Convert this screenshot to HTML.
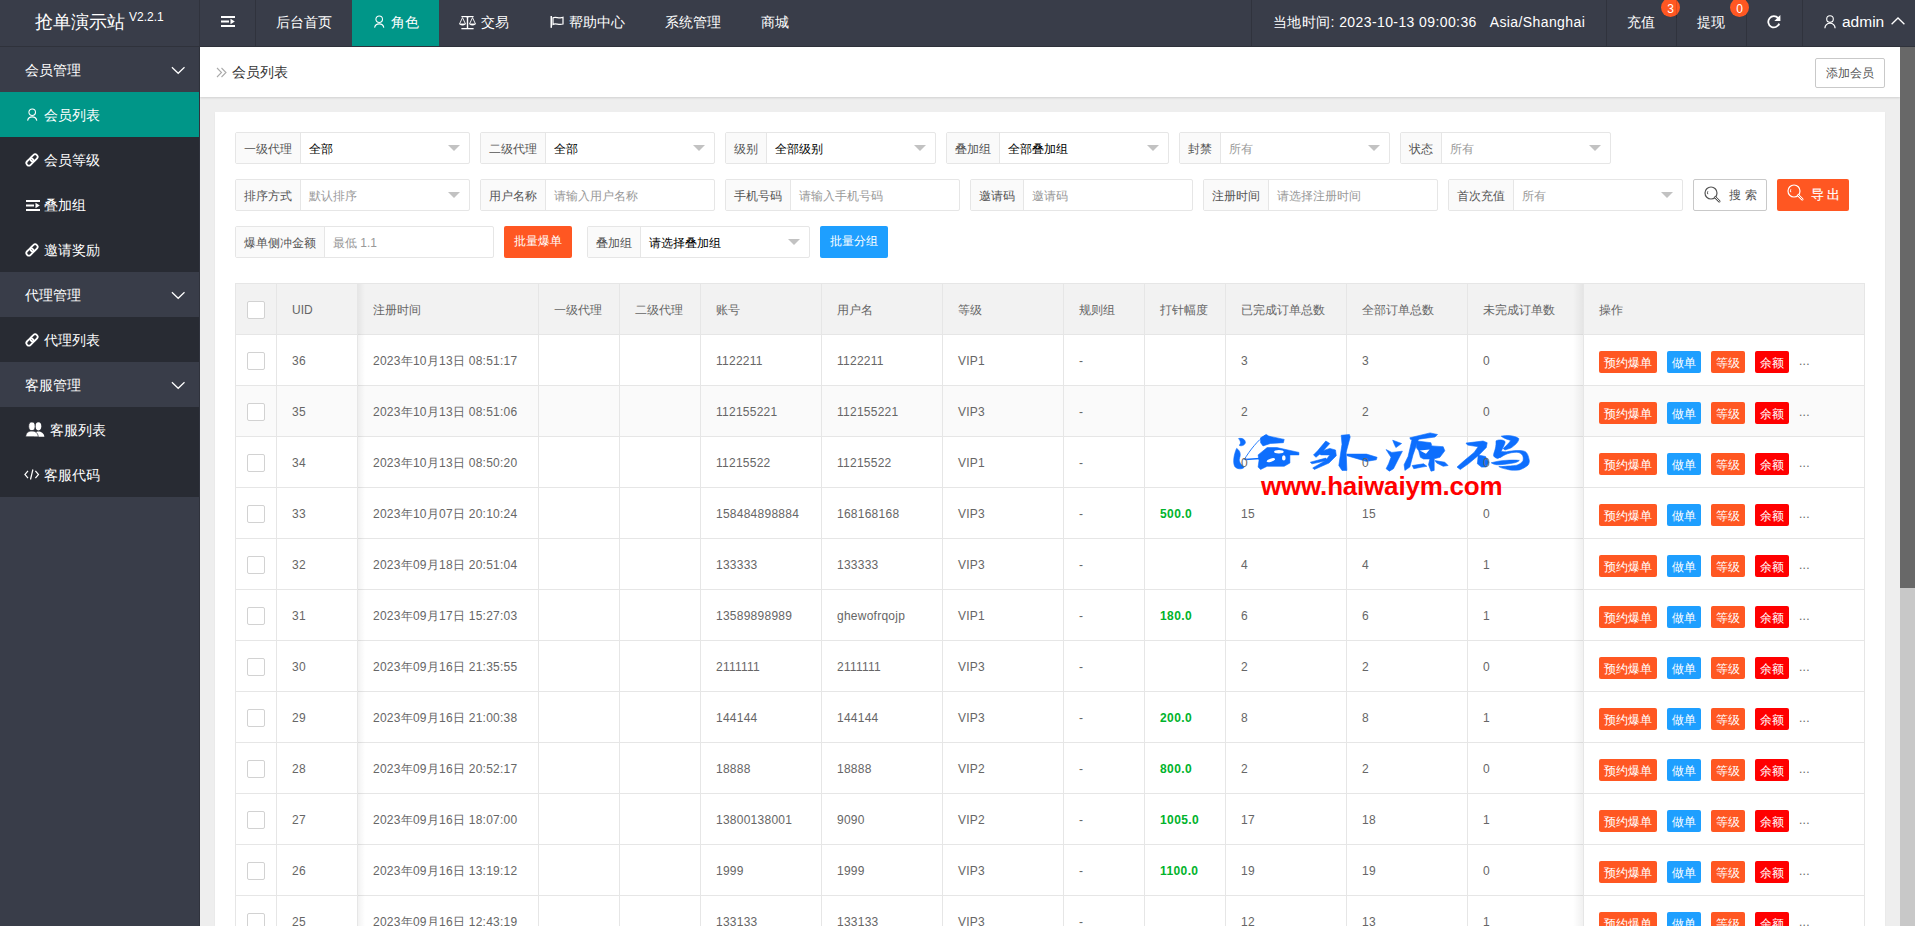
<!DOCTYPE html>
<html><head><meta charset="utf-8"><title>会员列表</title>
<style>
*{margin:0;padding:0;box-sizing:border-box}
html,body{width:1915px;height:926px;overflow:hidden;background:#eeeeee;font-family:"Liberation Sans",sans-serif;}
.a{position:absolute}
.t{position:absolute;white-space:nowrap}
.hdr{position:absolute;left:0;top:0;width:1915px;height:47px;background:#393D49;border-bottom:1px solid #2F323B}
.sep{position:absolute;top:0;width:1px;height:46px;background:#30333D}
.nav{position:absolute;top:-1px;height:46px;line-height:46px;color:#fff;font-size:14px;white-space:nowrap}
.side{position:absolute;left:0;top:47px;width:200px;height:879px;background:#393D49;border-right:1px solid #30333D}
.sg{position:absolute;left:0;width:199px;height:45px;line-height:47px;color:#fff;font-size:14px;padding-left:25px}
.sc{position:absolute;left:0;width:199px;height:45px;line-height:45px;color:#fff;font-size:14px;background:#282B33}
.fi{position:absolute;height:32px;border:1px solid #e6e6e6;border-radius:2px;background:#fff}
.fl{position:absolute;left:0;top:0;height:30px;line-height:32px;padding:0 8px;background:#FAFAFA;border-right:1px solid #e6e6e6;color:#555;font-size:12px;white-space:nowrap}
.fv{position:absolute;top:0;height:30px;line-height:32px;font-size:12px;white-space:nowrap;color:#000}
.ph{color:#999}
.btn{position:absolute;height:32px;line-height:32px;border-radius:2px;color:#fff;font-size:12px;text-align:center;white-space:nowrap}
.tc{position:absolute;z-index:2;font-size:12px;color:#666;white-space:nowrap;letter-spacing:0.25px;margin-top:1px}
.cb{position:absolute;width:18px;height:18px;border:1px solid #d2d2d2;border-radius:2px;background:#fff}
.xs{position:absolute;height:22px;line-height:24px;padding:0 5px;font-size:12px;color:#fff;border-radius:2px;white-space:nowrap}
</style></head><body>

<div class="hdr"></div>
<div class="t" style="left:35px;top:7px;height:30px;line-height:30px;font-size:18px;color:#fff">抢单演示站</div>
<div class="t" style="left:129px;top:10px;line-height:14px;font-size:12px;color:#fff">V2.2.1</div>
<div class="sep" style="left:199px"></div>
<div class="sep" style="left:255px"></div>
<svg width="16" height="14" viewBox="0 0 16 14" style="position:absolute;left:221px;top:15px"><rect x="0" y="1" width="14" height="2" fill="#fff"/><rect x="0" y="5.5" width="8" height="2" fill="#fff"/><path d="M9.5 3.8 L13.8 6.5 L9.5 9.2Z" fill="#fff"/><rect x="0" y="10" width="14" height="2" fill="#fff"/></svg>
<div class="a" style="left:352px;top:0;width:87px;height:46px;background:#009688"></div>
<div class="nav" style="left:276px">后台首页</div>
<svg width="14" height="16" viewBox="0 0 14 16" style="position:absolute;left:373px;top:15px"><circle cx="6.2" cy="4.2" r="3.3" fill="none" stroke="#fff" stroke-width="1.05"/><path d="M1.6 12.6 A4.7 4.7 0 0 1 10.8 12.6" fill="none" stroke="#fff" stroke-width="1.15"/></svg>
<div class="nav" style="left:391px">角色</div>
<svg width="20" height="16" viewBox="0 0 20 16" style="position:absolute;left:459px;top:16px"><rect x="2.4" y="0" width="12.2" height="1.2" fill="#fff"/><circle cx="8.5" cy="0.6" r="1.2" fill="#fff"/><rect x="7.8" y="0.5" width="1.4" height="12" fill="#fff"/><rect x="2.4" y="12" width="12.2" height="1.3" fill="#fff"/><path d="M3.5 1.6 L0.5 8 L6.5 8 Z" fill="none" stroke="#fff" stroke-width="0.9"/><path d="M0.3 8 Q3.5 11.2 6.7 8 Z" fill="#fff"/><path d="M13.5 1.6 L10.5 8 L16.5 8 Z" fill="none" stroke="#fff" stroke-width="0.9"/><path d="M10.3 8 Q13.5 11.2 16.7 8 Z" fill="#fff"/></svg>
<div class="nav" style="left:481px">交易</div>
<svg width="16" height="14" viewBox="0 0 16 14" style="position:absolute;left:550px;top:16px"><rect x="0.5" y="0" width="1.5" height="11.8" fill="#fff"/><path d="M3 1.8 C6 0.2 8.6 3 13 1.4 L13 8 C8.6 9.6 6 6.8 3 8.4 Z" fill="none" stroke="#fff" stroke-width="1.2"/></svg>
<div class="nav" style="left:569px">帮助中心</div>
<div class="nav" style="left:665px">系统管理</div>
<div class="nav" style="left:761px">商城</div>
<div class="sep" style="left:1251px"></div>
<div class="nav" style="left:1273px;letter-spacing:0.4px">当地时间: 2023-10-13 09:00:36 &nbsp;&nbsp;Asia/Shanghai</div>
<div class="sep" style="left:1606px"></div>
<div class="sep" style="left:1676px"></div>
<div class="sep" style="left:1746px"></div>
<div class="nav" style="left:1627px">充值</div>
<div class="nav" style="left:1697px">提现</div>
<div class="a" style="left:1661px;top:-2px;width:19px;height:19px;border-radius:50%;background:#FF5722;color:#fff;font-size:12px;line-height:19px;text-align:center;padding-top:2px">3</div>
<div class="a" style="left:1730px;top:-2px;width:19px;height:19px;border-radius:50%;background:#FF5722;color:#fff;font-size:12px;line-height:19px;text-align:center;padding-top:2px">0</div>
<div class="a" style="left:1676px;top:0;width:1px;height:18px;background:rgba(0,0,0,.12)"></div>
<svg width="16" height="16" viewBox="0 0 16 16" style="position:absolute;left:1766px;top:14px"><path d="M12.2 4.2 A5.6 5.6 0 1 0 13.2 9.6" fill="none" stroke="#fff" stroke-width="1.8"/><path d="M8.3 7 L14.4 7 L14.4 0.9 Z" fill="#fff"/></svg>
<div class="sep" style="left:1802px"></div>
<svg width="14" height="16" viewBox="0 0 14 16" style="position:absolute;left:1824px;top:14.5px"><circle cx="6" cy="4.1" r="3.3" fill="none" stroke="#fff" stroke-width="1.1"/><path d="M0.9 13.2 A5.1 5.1 0 0 1 11.1 13.2" fill="none" stroke="#fff" stroke-width="1.2"/></svg>
<div class="nav" style="left:1842px;top:-1px;font-size:15.5px">admin</div>
<svg width="16" height="10" viewBox="0 0 16 10" style="position:absolute;left:1891px;top:17px"><path d="M0.6 7.2 L7 1 L13.4 7.2" fill="none" stroke="#fff" stroke-width="1.3"/></svg>
<div class="side"></div>
<div class="sg" style="top:47px">会员管理</div>
<svg width="16" height="10" viewBox="0 0 16 10" style="position:absolute;left:171px;top:66px"><path d="M0.9 1.2 L7.2 7.3 L13.5 1.2" fill="none" stroke="#fff" stroke-width="1.2"/></svg>
<div class="sc" style="top:92px;background:#009688;"></div>
<svg width="14" height="16" viewBox="0 0 14 16" style="position:absolute;left:26px;top:108px"><circle cx="6.2" cy="4.2" r="3.3" fill="none" stroke="#fff" stroke-width="1.05"/><path d="M1.6 12.6 A4.7 4.7 0 0 1 10.8 12.6" fill="none" stroke="#fff" stroke-width="1.15"/></svg>
<div class="t" style="left:44px;top:93px;line-height:45px;font-size:14px;color:#fff">会员列表</div>
<div class="sc" style="top:137px;"></div>
<svg width="18" height="18" viewBox="0 0 18 18" style="position:absolute;left:24px;top:152px"><g transform="translate(8 7.9) rotate(-45)"><rect x="-6.9" y="-2.5" width="8.1" height="5" rx="2.5" fill="none" stroke="#fff" stroke-width="1.8"/><rect x="-1.2" y="-2.5" width="8.1" height="5" rx="2.5" fill="none" stroke="#fff" stroke-width="1.8"/></g></svg>
<div class="t" style="left:44px;top:138px;line-height:45px;font-size:14px;color:#fff">会员等级</div>
<div class="sc" style="top:182px;"></div>
<svg width="16" height="14" viewBox="0 0 16 14" style="position:absolute;left:26px;top:199px"><rect x="0" y="1" width="14" height="2" fill="#fff"/><rect x="0" y="5.5" width="8" height="2" fill="#fff"/><path d="M9.5 3.8 L13.8 6.5 L9.5 9.2Z" fill="#fff"/><rect x="0" y="10" width="14" height="2" fill="#fff"/></svg>
<div class="t" style="left:44px;top:183px;line-height:45px;font-size:14px;color:#fff">叠加组</div>
<div class="sc" style="top:227px;"></div>
<svg width="18" height="18" viewBox="0 0 18 18" style="position:absolute;left:24px;top:242px"><g transform="translate(8 7.9) rotate(-45)"><rect x="-6.9" y="-2.5" width="8.1" height="5" rx="2.5" fill="none" stroke="#fff" stroke-width="1.8"/><rect x="-1.2" y="-2.5" width="8.1" height="5" rx="2.5" fill="none" stroke="#fff" stroke-width="1.8"/></g></svg>
<div class="t" style="left:44px;top:228px;line-height:45px;font-size:14px;color:#fff">邀请奖励</div>
<div class="sg" style="top:272px">代理管理</div>
<svg width="16" height="10" viewBox="0 0 16 10" style="position:absolute;left:171px;top:291px"><path d="M0.9 1.2 L7.2 7.3 L13.5 1.2" fill="none" stroke="#fff" stroke-width="1.2"/></svg>
<div class="sc" style="top:317px;"></div>
<svg width="18" height="18" viewBox="0 0 18 18" style="position:absolute;left:24px;top:332px"><g transform="translate(8 7.9) rotate(-45)"><rect x="-6.9" y="-2.5" width="8.1" height="5" rx="2.5" fill="none" stroke="#fff" stroke-width="1.8"/><rect x="-1.2" y="-2.5" width="8.1" height="5" rx="2.5" fill="none" stroke="#fff" stroke-width="1.8"/></g></svg>
<div class="t" style="left:44px;top:318px;line-height:45px;font-size:14px;color:#fff">代理列表</div>
<div class="sg" style="top:362px">客服管理</div>
<svg width="16" height="10" viewBox="0 0 16 10" style="position:absolute;left:171px;top:381px"><path d="M0.9 1.2 L7.2 7.3 L13.5 1.2" fill="none" stroke="#fff" stroke-width="1.2"/></svg>
<div class="sc" style="top:407px;"></div>
<svg width="22" height="16" viewBox="0 0 22 16" style="position:absolute;left:25px;top:422px"><ellipse cx="13.4" cy="4.3" rx="2.9" ry="4.1" fill="#fff"/><path d="M9 14.8 C9.3 10.8 11 9.4 13.4 9.4 C16 9.4 18.9 10.8 19.4 14.8 Z" fill="#fff"/><ellipse cx="6.9" cy="4.3" rx="3.2" ry="4.3" fill="#fff" stroke="#282B33" stroke-width="0.7"/><path d="M0.7 14.8 C1 10.6 3.5 9.1 6.9 9.1 C10.3 9.1 12.8 10.6 13.3 14.8 Z" fill="#fff" stroke="#282B33" stroke-width="0.7"/></svg>
<div class="t" style="left:50px;top:408px;line-height:45px;font-size:14px;color:#fff">客服列表</div>
<div class="sc" style="top:452px;"></div>
<svg width="16" height="14" viewBox="0 0 16 14" style="position:absolute;left:24px;top:468px"><path d="M4 2.8 L0.9 6.5 L4 10.2" fill="none" stroke="#fff" stroke-width="1.2"/><path d="M11.4 2.8 L14.5 6.5 L11.4 10.2" fill="none" stroke="#fff" stroke-width="1.2"/><path d="M8.9 1.5 L6.5 11.5" fill="none" stroke="#fff" stroke-width="1.2"/></svg>
<div class="t" style="left:44px;top:453px;line-height:45px;font-size:14px;color:#fff">客服代码</div>
<div class="a" style="left:200px;top:47px;width:1700px;height:50px;background:#fff;box-shadow:0 1px 2px rgba(0,0,0,.12)"></div>
<svg width="14" height="12" viewBox="0 0 14 12" style="position:absolute;left:215.5px;top:66.5px"><path d="M1 1 L5.5 5.5 L1 10" fill="none" stroke="#aaa" stroke-width="1.1"/><path d="M5.5 1 L10 5.5 L5.5 10" fill="none" stroke="#aaa" stroke-width="1.1"/></svg>
<div class="t" style="left:232px;top:47px;line-height:50px;font-size:14px;color:#333">会员列表</div>
<div class="a" style="left:1815px;top:58px;width:70px;height:30px;line-height:28px;border:1px solid #C9C9C9;border-radius:2px;background:#fff;color:#555;font-size:12px;text-align:center">添加会员</div>
<div class="a" style="left:1900px;top:47px;width:15px;height:879px;background:#c8c8c8"></div>
<div class="a" style="left:1900px;top:47px;width:15px;height:541px;background:#686868"></div>
<div class="a" style="left:215px;top:112px;width:1670px;height:814px;background:#fff;box-shadow:0 1px 2px rgba(0,0,0,.05)"></div>
<div class="fi" style="left:235px;top:132px;width:235px"><div class="fl">一级代理</div><div class="fv" style="left:73px">全部</div></div>
<div style="position:absolute;left:448px;top:145px;width:0;height:0;border-left:6px solid transparent;border-right:6px solid transparent;border-top:6px solid #c2c2c2"></div>
<div class="fi" style="left:480px;top:132px;width:235px"><div class="fl">二级代理</div><div class="fv" style="left:73px">全部</div></div>
<div style="position:absolute;left:693px;top:145px;width:0;height:0;border-left:6px solid transparent;border-right:6px solid transparent;border-top:6px solid #c2c2c2"></div>
<div class="fi" style="left:725px;top:132px;width:211px"><div class="fl">级别</div><div class="fv" style="left:49px">全部级别</div></div>
<div style="position:absolute;left:914px;top:145px;width:0;height:0;border-left:6px solid transparent;border-right:6px solid transparent;border-top:6px solid #c2c2c2"></div>
<div class="fi" style="left:946px;top:132px;width:223px"><div class="fl">叠加组</div><div class="fv" style="left:61px">全部叠加组</div></div>
<div style="position:absolute;left:1147px;top:145px;width:0;height:0;border-left:6px solid transparent;border-right:6px solid transparent;border-top:6px solid #c2c2c2"></div>
<div class="fi" style="left:1179px;top:132px;width:211px"><div class="fl">封禁</div><div class="fv ph" style="left:49px">所有</div></div>
<div style="position:absolute;left:1368px;top:145px;width:0;height:0;border-left:6px solid transparent;border-right:6px solid transparent;border-top:6px solid #c2c2c2"></div>
<div class="fi" style="left:1400px;top:132px;width:211px"><div class="fl">状态</div><div class="fv ph" style="left:49px">所有</div></div>
<div style="position:absolute;left:1589px;top:145px;width:0;height:0;border-left:6px solid transparent;border-right:6px solid transparent;border-top:6px solid #c2c2c2"></div>
<div class="fi" style="left:235px;top:179px;width:235px"><div class="fl">排序方式</div><div class="fv ph" style="left:73px">默认排序</div></div>
<div style="position:absolute;left:448px;top:192px;width:0;height:0;border-left:6px solid transparent;border-right:6px solid transparent;border-top:6px solid #c2c2c2"></div>
<div class="fi" style="left:480px;top:179px;width:235px"><div class="fl">用户名称</div><div class="fv ph" style="left:73px">请输入用户名称</div></div>
<div class="fi" style="left:725px;top:179px;width:235px"><div class="fl">手机号码</div><div class="fv ph" style="left:73px">请输入手机号码</div></div>
<div class="fi" style="left:970px;top:179px;width:223px"><div class="fl">邀请码</div><div class="fv ph" style="left:61px">邀请码</div></div>
<div class="fi" style="left:1203px;top:179px;width:235px"><div class="fl">注册时间</div><div class="fv ph" style="left:73px">请选择注册时间</div></div>
<div class="fi" style="left:1448px;top:179px;width:235px"><div class="fl">首次充值</div><div class="fv ph" style="left:73px">所有</div></div>
<div style="position:absolute;left:1661px;top:192px;width:0;height:0;border-left:6px solid transparent;border-right:6px solid transparent;border-top:6px solid #c2c2c2"></div>
<div class="btn" style="left:1693px;top:179px;width:74px;border:1px solid #C9C9C9;background:#fff;color:#555;line-height:30px"></div>
<svg width="18" height="18" viewBox="0 0 18 18" style="position:absolute;left:1704px;top:186px"><circle cx="7" cy="7" r="6" fill="none" stroke="#555" stroke-width="1.2"/><path d="M3.8 5.3 A3.6 3.6 0 0 0 3.8 8.2" fill="none" stroke="#555" stroke-width="1"/><path d="M11.3 11.3 L15.3 15.3" stroke="#555" stroke-width="2.4" stroke-linecap="round"/><path d="M11.3 11.3 L15.3 15.3" stroke="#fff" stroke-width="0.9" stroke-linecap="round"/></svg>
<div class="t" style="left:1729px;top:179px;line-height:32px;font-size:12px;color:#555;letter-spacing:4px">搜索</div>
<div class="btn" style="left:1777px;top:179px;width:72px;background:#FF5722"></div>
<svg width="18" height="18" viewBox="0 0 18 18" style="position:absolute;left:1787px;top:184px"><circle cx="7" cy="7" r="6" fill="none" stroke="#fff" stroke-width="1.2"/><path d="M3.8 5.3 A3.6 3.6 0 0 0 3.8 8.2" fill="none" stroke="#fff" stroke-width="1"/><path d="M11.3 11.3 L15.3 15.3" stroke="#fff" stroke-width="2.4" stroke-linecap="round"/><path d="M11.3 11.3 L15.3 15.3" stroke="#FF5722" stroke-width="0.9" stroke-linecap="round"/></svg>
<div class="t" style="left:1811px;top:179px;line-height:32px;font-size:13px;color:#fff;letter-spacing:3px;-webkit-text-stroke:0.2px #fff">导出</div>
<div class="fi" style="left:235px;top:226px;width:259px"><div class="fl">爆单侧冲金额</div><div class="fv ph" style="left:97px">最低 1.1</div></div>
<div class="btn" style="left:504px;top:226px;width:68px;background:#FF5722;line-height:30px">批量爆单</div>
<div class="fi" style="left:587px;top:226px;width:223px"><div class="fl">叠加组</div><div class="fv" style="left:61px">请选择叠加组</div></div>
<div style="position:absolute;left:788px;top:239px;width:0;height:0;border-left:6px solid transparent;border-right:6px solid transparent;border-top:6px solid #c2c2c2"></div>
<div class="btn" style="left:820px;top:226px;width:68px;background:#1E9FFF;line-height:30px">批量分组</div>
<div class="a" style="left:235px;top:283px;width:1630px;height:52px;background:#F2F2F2"></div>
<div class="a" style="left:235px;top:385px;width:1630px;height:51px;background:#FAFAFA"></div>
<div class="a" style="left:235px;top:283px;width:1630px;height:1px;background:#e6e6e6"></div>
<div class="a" style="left:235px;top:334px;width:1630px;height:1px;background:#e6e6e6"></div>
<div class="a" style="left:235px;top:385px;width:1630px;height:1px;background:#e6e6e6"></div>
<div class="a" style="left:235px;top:436px;width:1630px;height:1px;background:#e6e6e6"></div>
<div class="a" style="left:235px;top:487px;width:1630px;height:1px;background:#e6e6e6"></div>
<div class="a" style="left:235px;top:538px;width:1630px;height:1px;background:#e6e6e6"></div>
<div class="a" style="left:235px;top:589px;width:1630px;height:1px;background:#e6e6e6"></div>
<div class="a" style="left:235px;top:640px;width:1630px;height:1px;background:#e6e6e6"></div>
<div class="a" style="left:235px;top:691px;width:1630px;height:1px;background:#e6e6e6"></div>
<div class="a" style="left:235px;top:742px;width:1630px;height:1px;background:#e6e6e6"></div>
<div class="a" style="left:235px;top:793px;width:1630px;height:1px;background:#e6e6e6"></div>
<div class="a" style="left:235px;top:844px;width:1630px;height:1px;background:#e6e6e6"></div>
<div class="a" style="left:235px;top:895px;width:1630px;height:1px;background:#e6e6e6"></div>
<div class="a" style="left:235px;top:283px;width:1px;height:643px;background:#e6e6e6"></div>
<div class="a" style="left:276px;top:283px;width:1px;height:643px;background:#e6e6e6"></div>
<div class="a" style="left:357px;top:283px;width:1px;height:643px;background:#e6e6e6"></div>
<div class="a" style="left:538px;top:283px;width:1px;height:643px;background:#e6e6e6"></div>
<div class="a" style="left:619px;top:283px;width:1px;height:643px;background:#e6e6e6"></div>
<div class="a" style="left:700px;top:283px;width:1px;height:643px;background:#e6e6e6"></div>
<div class="a" style="left:821px;top:283px;width:1px;height:643px;background:#e6e6e6"></div>
<div class="a" style="left:942px;top:283px;width:1px;height:643px;background:#e6e6e6"></div>
<div class="a" style="left:1063px;top:283px;width:1px;height:643px;background:#e6e6e6"></div>
<div class="a" style="left:1144px;top:283px;width:1px;height:643px;background:#e6e6e6"></div>
<div class="a" style="left:1225px;top:283px;width:1px;height:643px;background:#e6e6e6"></div>
<div class="a" style="left:1346px;top:283px;width:1px;height:643px;background:#e6e6e6"></div>
<div class="a" style="left:1467px;top:283px;width:1px;height:643px;background:#e6e6e6"></div>
<div class="a" style="left:1583px;top:283px;width:1px;height:643px;background:#e6e6e6"></div>
<div class="a" style="left:1864px;top:283px;width:1px;height:643px;background:#e6e6e6"></div>
<div class="a" style="left:358px;top:284px;width:7px;height:643px;background:linear-gradient(to right,rgba(0,0,0,.05),rgba(0,0,0,0))"></div>
<div class="a" style="left:1573px;top:284px;width:10px;height:643px;background:linear-gradient(to left,rgba(0,0,0,.055),rgba(0,0,0,0))"></div>
<div class="tc" style="left:292px;top:284px;line-height:50px;letter-spacing:0">UID</div>
<div class="tc" style="left:373px;top:284px;line-height:50px;letter-spacing:0">注册时间</div>
<div class="tc" style="left:554px;top:284px;line-height:50px;letter-spacing:0">一级代理</div>
<div class="tc" style="left:635px;top:284px;line-height:50px;letter-spacing:0">二级代理</div>
<div class="tc" style="left:716px;top:284px;line-height:50px;letter-spacing:0">账号</div>
<div class="tc" style="left:837px;top:284px;line-height:50px;letter-spacing:0">用户名</div>
<div class="tc" style="left:958px;top:284px;line-height:50px;letter-spacing:0">等级</div>
<div class="tc" style="left:1079px;top:284px;line-height:50px;letter-spacing:0">规则组</div>
<div class="tc" style="left:1160px;top:284px;line-height:50px;letter-spacing:0">打针幅度</div>
<div class="tc" style="left:1241px;top:284px;line-height:50px;letter-spacing:0">已完成订单总数</div>
<div class="tc" style="left:1362px;top:284px;line-height:50px;letter-spacing:0">全部订单总数</div>
<div class="tc" style="left:1483px;top:284px;line-height:50px;letter-spacing:0">未完成订单数</div>
<div class="tc" style="left:1599px;top:284px;line-height:50px;letter-spacing:0">操作</div>
<div class="cb" style="left:247px;top:301px"></div>
<div class="cb" style="left:247px;top:352px"></div>
<div class="tc" style="left:292px;top:335px;line-height:50px">36</div>
<div class="tc" style="left:373px;top:335px;line-height:50px">2023年10月13日 08:51:17</div>
<div class="tc" style="left:716px;top:335px;line-height:50px">1122211</div>
<div class="tc" style="left:837px;top:335px;line-height:50px">1122211</div>
<div class="tc" style="left:958px;top:335px;line-height:50px">VIP1</div>
<div class="tc" style="left:1079px;top:335px;line-height:50px">-</div>
<div class="tc" style="left:1241px;top:335px;line-height:50px">3</div>
<div class="tc" style="left:1362px;top:335px;line-height:50px">3</div>
<div class="tc" style="left:1483px;top:335px;line-height:50px">0</div>
<div class="xs" style="left:1599px;top:351px;background:#FF5722">预约爆单</div>
<div class="xs" style="left:1667px;top:351px;background:#1E9FFF">做单</div>
<div class="xs" style="left:1711px;top:351px;background:#FF5722">等级</div>
<div class="xs" style="left:1755px;top:351px;background:#FF0000">余额</div>
<div class="tc" style="left:1799px;top:335px;line-height:50px;color:#666">...</div>
<div class="cb" style="left:247px;top:403px"></div>
<div class="tc" style="left:292px;top:386px;line-height:50px">35</div>
<div class="tc" style="left:373px;top:386px;line-height:50px">2023年10月13日 08:51:06</div>
<div class="tc" style="left:716px;top:386px;line-height:50px">112155221</div>
<div class="tc" style="left:837px;top:386px;line-height:50px">112155221</div>
<div class="tc" style="left:958px;top:386px;line-height:50px">VIP3</div>
<div class="tc" style="left:1079px;top:386px;line-height:50px">-</div>
<div class="tc" style="left:1241px;top:386px;line-height:50px">2</div>
<div class="tc" style="left:1362px;top:386px;line-height:50px">2</div>
<div class="tc" style="left:1483px;top:386px;line-height:50px">0</div>
<div class="xs" style="left:1599px;top:402px;background:#FF5722">预约爆单</div>
<div class="xs" style="left:1667px;top:402px;background:#1E9FFF">做单</div>
<div class="xs" style="left:1711px;top:402px;background:#FF5722">等级</div>
<div class="xs" style="left:1755px;top:402px;background:#FF0000">余额</div>
<div class="tc" style="left:1799px;top:386px;line-height:50px;color:#666">...</div>
<div class="cb" style="left:247px;top:454px"></div>
<div class="tc" style="left:292px;top:437px;line-height:50px">34</div>
<div class="tc" style="left:373px;top:437px;line-height:50px">2023年10月13日 08:50:20</div>
<div class="tc" style="left:716px;top:437px;line-height:50px">11215522</div>
<div class="tc" style="left:837px;top:437px;line-height:50px">11215522</div>
<div class="tc" style="left:958px;top:437px;line-height:50px">VIP1</div>
<div class="tc" style="left:1079px;top:437px;line-height:50px">-</div>
<div class="tc" style="left:1241px;top:437px;line-height:50px">0</div>
<div class="tc" style="left:1362px;top:437px;line-height:50px">0</div>
<div class="tc" style="left:1483px;top:437px;line-height:50px">0</div>
<div class="xs" style="left:1599px;top:453px;background:#FF5722">预约爆单</div>
<div class="xs" style="left:1667px;top:453px;background:#1E9FFF">做单</div>
<div class="xs" style="left:1711px;top:453px;background:#FF5722">等级</div>
<div class="xs" style="left:1755px;top:453px;background:#FF0000">余额</div>
<div class="tc" style="left:1799px;top:437px;line-height:50px;color:#666">...</div>
<div class="cb" style="left:247px;top:505px"></div>
<div class="tc" style="left:292px;top:488px;line-height:50px">33</div>
<div class="tc" style="left:373px;top:488px;line-height:50px">2023年10月07日 20:10:24</div>
<div class="tc" style="left:716px;top:488px;line-height:50px">158484898884</div>
<div class="tc" style="left:837px;top:488px;line-height:50px">168168168</div>
<div class="tc" style="left:958px;top:488px;line-height:50px">VIP3</div>
<div class="tc" style="left:1079px;top:488px;line-height:50px">-</div>
<div class="tc" style="left:1241px;top:488px;line-height:50px">15</div>
<div class="tc" style="left:1362px;top:488px;line-height:50px">15</div>
<div class="tc" style="left:1483px;top:488px;line-height:50px">0</div>
<div class="tc" style="left:1160px;top:488px;line-height:50px;color:#00B32C;font-weight:bold;letter-spacing:0.4px">500.0</div>
<div class="xs" style="left:1599px;top:504px;background:#FF5722">预约爆单</div>
<div class="xs" style="left:1667px;top:504px;background:#1E9FFF">做单</div>
<div class="xs" style="left:1711px;top:504px;background:#FF5722">等级</div>
<div class="xs" style="left:1755px;top:504px;background:#FF0000">余额</div>
<div class="tc" style="left:1799px;top:488px;line-height:50px;color:#666">...</div>
<div class="cb" style="left:247px;top:556px"></div>
<div class="tc" style="left:292px;top:539px;line-height:50px">32</div>
<div class="tc" style="left:373px;top:539px;line-height:50px">2023年09月18日 20:51:04</div>
<div class="tc" style="left:716px;top:539px;line-height:50px">133333</div>
<div class="tc" style="left:837px;top:539px;line-height:50px">133333</div>
<div class="tc" style="left:958px;top:539px;line-height:50px">VIP3</div>
<div class="tc" style="left:1079px;top:539px;line-height:50px">-</div>
<div class="tc" style="left:1241px;top:539px;line-height:50px">4</div>
<div class="tc" style="left:1362px;top:539px;line-height:50px">4</div>
<div class="tc" style="left:1483px;top:539px;line-height:50px">1</div>
<div class="xs" style="left:1599px;top:555px;background:#FF5722">预约爆单</div>
<div class="xs" style="left:1667px;top:555px;background:#1E9FFF">做单</div>
<div class="xs" style="left:1711px;top:555px;background:#FF5722">等级</div>
<div class="xs" style="left:1755px;top:555px;background:#FF0000">余额</div>
<div class="tc" style="left:1799px;top:539px;line-height:50px;color:#666">...</div>
<div class="cb" style="left:247px;top:607px"></div>
<div class="tc" style="left:292px;top:590px;line-height:50px">31</div>
<div class="tc" style="left:373px;top:590px;line-height:50px">2023年09月17日 15:27:03</div>
<div class="tc" style="left:716px;top:590px;line-height:50px">13589898989</div>
<div class="tc" style="left:837px;top:590px;line-height:50px">ghewofrqojp</div>
<div class="tc" style="left:958px;top:590px;line-height:50px">VIP1</div>
<div class="tc" style="left:1079px;top:590px;line-height:50px">-</div>
<div class="tc" style="left:1241px;top:590px;line-height:50px">6</div>
<div class="tc" style="left:1362px;top:590px;line-height:50px">6</div>
<div class="tc" style="left:1483px;top:590px;line-height:50px">1</div>
<div class="tc" style="left:1160px;top:590px;line-height:50px;color:#00B32C;font-weight:bold;letter-spacing:0.4px">180.0</div>
<div class="xs" style="left:1599px;top:606px;background:#FF5722">预约爆单</div>
<div class="xs" style="left:1667px;top:606px;background:#1E9FFF">做单</div>
<div class="xs" style="left:1711px;top:606px;background:#FF5722">等级</div>
<div class="xs" style="left:1755px;top:606px;background:#FF0000">余额</div>
<div class="tc" style="left:1799px;top:590px;line-height:50px;color:#666">...</div>
<div class="cb" style="left:247px;top:658px"></div>
<div class="tc" style="left:292px;top:641px;line-height:50px">30</div>
<div class="tc" style="left:373px;top:641px;line-height:50px">2023年09月16日 21:35:55</div>
<div class="tc" style="left:716px;top:641px;line-height:50px">2111111</div>
<div class="tc" style="left:837px;top:641px;line-height:50px">2111111</div>
<div class="tc" style="left:958px;top:641px;line-height:50px">VIP3</div>
<div class="tc" style="left:1079px;top:641px;line-height:50px">-</div>
<div class="tc" style="left:1241px;top:641px;line-height:50px">2</div>
<div class="tc" style="left:1362px;top:641px;line-height:50px">2</div>
<div class="tc" style="left:1483px;top:641px;line-height:50px">0</div>
<div class="xs" style="left:1599px;top:657px;background:#FF5722">预约爆单</div>
<div class="xs" style="left:1667px;top:657px;background:#1E9FFF">做单</div>
<div class="xs" style="left:1711px;top:657px;background:#FF5722">等级</div>
<div class="xs" style="left:1755px;top:657px;background:#FF0000">余额</div>
<div class="tc" style="left:1799px;top:641px;line-height:50px;color:#666">...</div>
<div class="cb" style="left:247px;top:709px"></div>
<div class="tc" style="left:292px;top:692px;line-height:50px">29</div>
<div class="tc" style="left:373px;top:692px;line-height:50px">2023年09月16日 21:00:38</div>
<div class="tc" style="left:716px;top:692px;line-height:50px">144144</div>
<div class="tc" style="left:837px;top:692px;line-height:50px">144144</div>
<div class="tc" style="left:958px;top:692px;line-height:50px">VIP3</div>
<div class="tc" style="left:1079px;top:692px;line-height:50px">-</div>
<div class="tc" style="left:1241px;top:692px;line-height:50px">8</div>
<div class="tc" style="left:1362px;top:692px;line-height:50px">8</div>
<div class="tc" style="left:1483px;top:692px;line-height:50px">1</div>
<div class="tc" style="left:1160px;top:692px;line-height:50px;color:#00B32C;font-weight:bold;letter-spacing:0.4px">200.0</div>
<div class="xs" style="left:1599px;top:708px;background:#FF5722">预约爆单</div>
<div class="xs" style="left:1667px;top:708px;background:#1E9FFF">做单</div>
<div class="xs" style="left:1711px;top:708px;background:#FF5722">等级</div>
<div class="xs" style="left:1755px;top:708px;background:#FF0000">余额</div>
<div class="tc" style="left:1799px;top:692px;line-height:50px;color:#666">...</div>
<div class="cb" style="left:247px;top:760px"></div>
<div class="tc" style="left:292px;top:743px;line-height:50px">28</div>
<div class="tc" style="left:373px;top:743px;line-height:50px">2023年09月16日 20:52:17</div>
<div class="tc" style="left:716px;top:743px;line-height:50px">18888</div>
<div class="tc" style="left:837px;top:743px;line-height:50px">18888</div>
<div class="tc" style="left:958px;top:743px;line-height:50px">VIP2</div>
<div class="tc" style="left:1079px;top:743px;line-height:50px">-</div>
<div class="tc" style="left:1241px;top:743px;line-height:50px">2</div>
<div class="tc" style="left:1362px;top:743px;line-height:50px">2</div>
<div class="tc" style="left:1483px;top:743px;line-height:50px">0</div>
<div class="tc" style="left:1160px;top:743px;line-height:50px;color:#00B32C;font-weight:bold;letter-spacing:0.4px">800.0</div>
<div class="xs" style="left:1599px;top:759px;background:#FF5722">预约爆单</div>
<div class="xs" style="left:1667px;top:759px;background:#1E9FFF">做单</div>
<div class="xs" style="left:1711px;top:759px;background:#FF5722">等级</div>
<div class="xs" style="left:1755px;top:759px;background:#FF0000">余额</div>
<div class="tc" style="left:1799px;top:743px;line-height:50px;color:#666">...</div>
<div class="cb" style="left:247px;top:811px"></div>
<div class="tc" style="left:292px;top:794px;line-height:50px">27</div>
<div class="tc" style="left:373px;top:794px;line-height:50px">2023年09月16日 18:07:00</div>
<div class="tc" style="left:716px;top:794px;line-height:50px">13800138001</div>
<div class="tc" style="left:837px;top:794px;line-height:50px">9090</div>
<div class="tc" style="left:958px;top:794px;line-height:50px">VIP2</div>
<div class="tc" style="left:1079px;top:794px;line-height:50px">-</div>
<div class="tc" style="left:1241px;top:794px;line-height:50px">17</div>
<div class="tc" style="left:1362px;top:794px;line-height:50px">18</div>
<div class="tc" style="left:1483px;top:794px;line-height:50px">1</div>
<div class="tc" style="left:1160px;top:794px;line-height:50px;color:#00B32C;font-weight:bold;letter-spacing:0.4px">1005.0</div>
<div class="xs" style="left:1599px;top:810px;background:#FF5722">预约爆单</div>
<div class="xs" style="left:1667px;top:810px;background:#1E9FFF">做单</div>
<div class="xs" style="left:1711px;top:810px;background:#FF5722">等级</div>
<div class="xs" style="left:1755px;top:810px;background:#FF0000">余额</div>
<div class="tc" style="left:1799px;top:794px;line-height:50px;color:#666">...</div>
<div class="cb" style="left:247px;top:862px"></div>
<div class="tc" style="left:292px;top:845px;line-height:50px">26</div>
<div class="tc" style="left:373px;top:845px;line-height:50px">2023年09月16日 13:19:12</div>
<div class="tc" style="left:716px;top:845px;line-height:50px">1999</div>
<div class="tc" style="left:837px;top:845px;line-height:50px">1999</div>
<div class="tc" style="left:958px;top:845px;line-height:50px">VIP3</div>
<div class="tc" style="left:1079px;top:845px;line-height:50px">-</div>
<div class="tc" style="left:1241px;top:845px;line-height:50px">19</div>
<div class="tc" style="left:1362px;top:845px;line-height:50px">19</div>
<div class="tc" style="left:1483px;top:845px;line-height:50px">0</div>
<div class="tc" style="left:1160px;top:845px;line-height:50px;color:#00B32C;font-weight:bold;letter-spacing:0.4px">1100.0</div>
<div class="xs" style="left:1599px;top:861px;background:#FF5722">预约爆单</div>
<div class="xs" style="left:1667px;top:861px;background:#1E9FFF">做单</div>
<div class="xs" style="left:1711px;top:861px;background:#FF5722">等级</div>
<div class="xs" style="left:1755px;top:861px;background:#FF0000">余额</div>
<div class="tc" style="left:1799px;top:845px;line-height:50px;color:#666">...</div>
<div class="cb" style="left:247px;top:913px"></div>
<div class="tc" style="left:292px;top:896px;line-height:50px">25</div>
<div class="tc" style="left:373px;top:896px;line-height:50px">2023年09月16日 12:43:19</div>
<div class="tc" style="left:716px;top:896px;line-height:50px">133133</div>
<div class="tc" style="left:837px;top:896px;line-height:50px">133133</div>
<div class="tc" style="left:958px;top:896px;line-height:50px">VIP3</div>
<div class="tc" style="left:1079px;top:896px;line-height:50px">-</div>
<div class="tc" style="left:1241px;top:896px;line-height:50px">12</div>
<div class="tc" style="left:1362px;top:896px;line-height:50px">13</div>
<div class="tc" style="left:1483px;top:896px;line-height:50px">1</div>
<div class="xs" style="left:1599px;top:912px;background:#FF5722">预约爆单</div>
<div class="xs" style="left:1667px;top:912px;background:#1E9FFF">做单</div>
<div class="xs" style="left:1711px;top:912px;background:#FF5722">等级</div>
<div class="xs" style="left:1755px;top:912px;background:#FF0000">余额</div>
<div class="tc" style="left:1799px;top:896px;line-height:50px;color:#666">...</div>
<svg width="310" height="50" viewBox="0 0 310 50" style="position:absolute;left:1228px;top:428px"><path d="M10.5 10.6 C14 9.6 17.5 11.5 17.4 14.8 C16.5 17.8 12.6 18.4 11.2 17.2 C13.4 15.6 12.6 12.8 10.5 10.6 Z" fill="#0D6EFD" stroke="#0D6EFD" stroke-width="0.6" stroke-linejoin="round"/><path d="M8.6 20.4 C11.8 22.2 13.2 25.8 11.6 30 C10.4 33.8 13.2 37 16.2 39.2 C14.2 41.6 8.6 41.4 6.6 38.2 C4.8 34 5.8 26.8 8.6 20.4 Z" fill="#0D6EFD" stroke="#0D6EFD" stroke-width="0.6" stroke-linejoin="round"/><path d="M32.6 9.8 L38.3 6.5 L40.7 8.1 L56.2 11.4 L55.4 14.7 L42.4 15.5 L35 17.9 L32.6 14.7 Z" fill="#0D6EFD" stroke="#0D6EFD" stroke-width="0.6" stroke-linejoin="round"/><path d="M30.1 26.9 L39.1 19.6 L48.9 19.6 L70.9 24.4 L70.9 26.9 L61.9 26.9 L61.9 35 L56.2 38.3 L39.1 38.3 L32.6 41.5 L30.1 39.1 L31 32.6 Z" fill="#0D6EFD" stroke="#0D6EFD" stroke-width="0.6" stroke-linejoin="round"/><path d="M97.8 13 L101.8 15.5 L93.7 24.4 L88 29.3 L85.5 26.9 L89.6 22.8 Z" fill="#0D6EFD" stroke="#0D6EFD" stroke-width="0.6" stroke-linejoin="round"/><path d="M89.6 24.4 L101.8 20.4 L107.5 22 L108.3 27.7 L101 35 L86.3 41.5 L84.7 39.9 L97.7 32.6 L101.8 26.9 L92.9 26.9 Z" fill="#0D6EFD" stroke="#0D6EFD" stroke-width="0.6" stroke-linejoin="round"/><path d="M82.3 34.2 L97.8 30.1 L99.4 32.6 L83.9 35.8 Z" fill="#0D6EFD" stroke="#0D6EFD" stroke-width="0.6" stroke-linejoin="round"/><path d="M113.2 7.3 L121.4 6.5 L122.2 9 L118.1 24.4 L118.9 42.4 L114 42.4 L110.8 37.5 L114 16.3 Z" fill="#0D6EFD" stroke="#0D6EFD" stroke-width="0.6" stroke-linejoin="round"/><path d="M118.9 26.1 L138.5 26.1 L149.1 29.3 L148.3 31.8 L138.5 33.4 L118.9 27.7 Z" fill="#0D6EFD" stroke="#0D6EFD" stroke-width="0.6" stroke-linejoin="round"/><path d="M164.7 12.2 L173.6 15.5 L167.9 19.6 L166.3 16.3 Z" fill="#0D6EFD" stroke="#0D6EFD" stroke-width="0.6" stroke-linejoin="round"/><path d="M158.1 21.6 L163.8 24.4 L174.4 23.2 L170.4 31 L165.5 40.7 L161.4 43.2 L158.1 40.7 L160.6 35.8 L163 29.3 Z" fill="#0D6EFD" stroke="#0D6EFD" stroke-width="0.6" stroke-linejoin="round"/><path d="M181.8 9.8 L202.1 4.9 L209.5 6.5 L207 9 L189.1 11.4 L182.6 11.4 Z" fill="#0D6EFD" stroke="#0D6EFD" stroke-width="0.6" stroke-linejoin="round"/><path d="M184.2 10.6 L190.7 10.6 L185 26.9 L181.8 39.1 L176.9 42.4 L176.1 36.7 L180.1 28.5 Z" fill="#0D6EFD" stroke="#0D6EFD" stroke-width="0.6" stroke-linejoin="round"/><path d="M189.1 13 L202.9 14.7 L203.8 17.9 L215.2 18.7 L216.8 22.8 L211.9 29.3 L205.4 31 L195.6 31 L192.4 29.3 L190.7 22.8 L188.3 19.6 Z" fill="#0D6EFD" stroke="#0D6EFD" stroke-width="0.6" stroke-linejoin="round"/><path d="M202.1 30.1 L206.2 31 L206.2 42.4 L203 43.2 L200.5 36.7 Z" fill="#0D6EFD" stroke="#0D6EFD" stroke-width="0.6" stroke-linejoin="round"/><path d="M184.2 37.5 L195.6 35.8 L198.9 38.3 L194 39.1 L185.8 40.7 Z" fill="#0D6EFD" stroke="#0D6EFD" stroke-width="0.6" stroke-linejoin="round"/><path d="M207 32.6 L216.8 34.2 L220.1 37.5 L215.2 38.3 L208.7 35 Z" fill="#0D6EFD" stroke="#0D6EFD" stroke-width="0.6" stroke-linejoin="round"/><path d="M238 15.1 L255.1 13 L259.2 14.7 L258.3 19.6 L251 26.9 L240.4 35.8 L232.3 41.5 L229 39.1 L236.3 32.6 L246.1 24.4 L250.2 18.7 L239.6 17.1 Z" fill="#0D6EFD" stroke="#0D6EFD" stroke-width="0.6" stroke-linejoin="round"/><path d="M250.2 26.9 L257.5 28.5 L260.8 34.2 L258.3 39.1 L253.5 39.1 L249.4 35.8 Z" fill="#0D6EFD" stroke="#0D6EFD" stroke-width="0.6" stroke-linejoin="round"/><path d="M273.2 8.2 C278 7.2 286 7 290.8 10.6 C291 14 286 18 282.7 20.1 L277 22 L275.1 20.5 C278 18 281 15 282.7 12.5 C280 11.5 276 10.5 273.2 8.2 Z" fill="#0D6EFD" stroke="#0D6EFD" stroke-width="0.6" stroke-linejoin="round"/><path d="M268 12.9 C270 11.5 275 11.5 277 13.4 C277.5 15 276 17 273.2 23.4 L278 23.9 C276 26 273 29 269.9 30.5 C267 30 265 28 265.6 26.7 C266 24 267.5 22 268 16.3 Z" fill="#0D6EFD" stroke="#0D6EFD" stroke-width="0.6" stroke-linejoin="round"/><path d="M269.9 29.1 C273 26 276 24.5 278 23.9 C283 22.8 290 22 295.1 22.9 C298 23.5 300 25 301.3 32.4 C301.5 35 300.5 37 298.9 38.1 C296 40 293 41.5 291.3 41.9 C287 42.3 284 42.2 281.8 41.9 C277 41 273 40 270.8 38.6 C274 38.5 277 38.5 279.4 38.1 C284 37.8 287 37.4 288.9 37.2 C292 36 294 34.5 295.1 32.4 C295.5 30 295.2 28 294.1 26.7 C292.5 25 290.5 24.3 288.9 24.3 C285 24.2 282 25 279.4 25.8 C276 27 274 28.5 272.3 29.6 Z" fill="#0D6EFD" stroke="#0D6EFD" stroke-width="0.6" stroke-linejoin="round"/><path d="M263.2 34.8 C268 33.5 273 32.6 277 32.4 C283 32 288 32 291.3 32.4 C290 33.8 288 34.4 286.5 34.8 C281 35.8 276 36.5 272.3 36.7 C269 36.9 266 36.8 263.2 34.8 Z" fill="#0D6EFD" stroke="#0D6EFD" stroke-width="0.6" stroke-linejoin="round"/><path d="M16 32 C22 22 30 12 37.5 7" fill="none" stroke="#0D6EFD" stroke-width="0.9"/><path d="M17 31.5 L32 30.5" fill="none" stroke="#0D6EFD" stroke-width="1.3"/><ellipse cx="42.8" cy="32.2" rx="4.3" ry="1.6" transform="rotate(-18 42.8 32.2)" fill="#fff"/><ellipse cx="50.9" cy="23.8" rx="4.8" ry="1.7" fill="#fff"/><ellipse cx="55.8" cy="29.9" rx="1.8" ry="2.6" fill="#fff"/><path d="M191.8 22.4 L201.6 21.6 L198 25.8 Z" fill="#fff"/></svg>
<div class="t" style="left:1261px;top:470px;font-size:26px;line-height:32px;color:#FF0000;font-weight:bold;letter-spacing:-0.2px">www.haiwaiym.com</div>
</body></html>
